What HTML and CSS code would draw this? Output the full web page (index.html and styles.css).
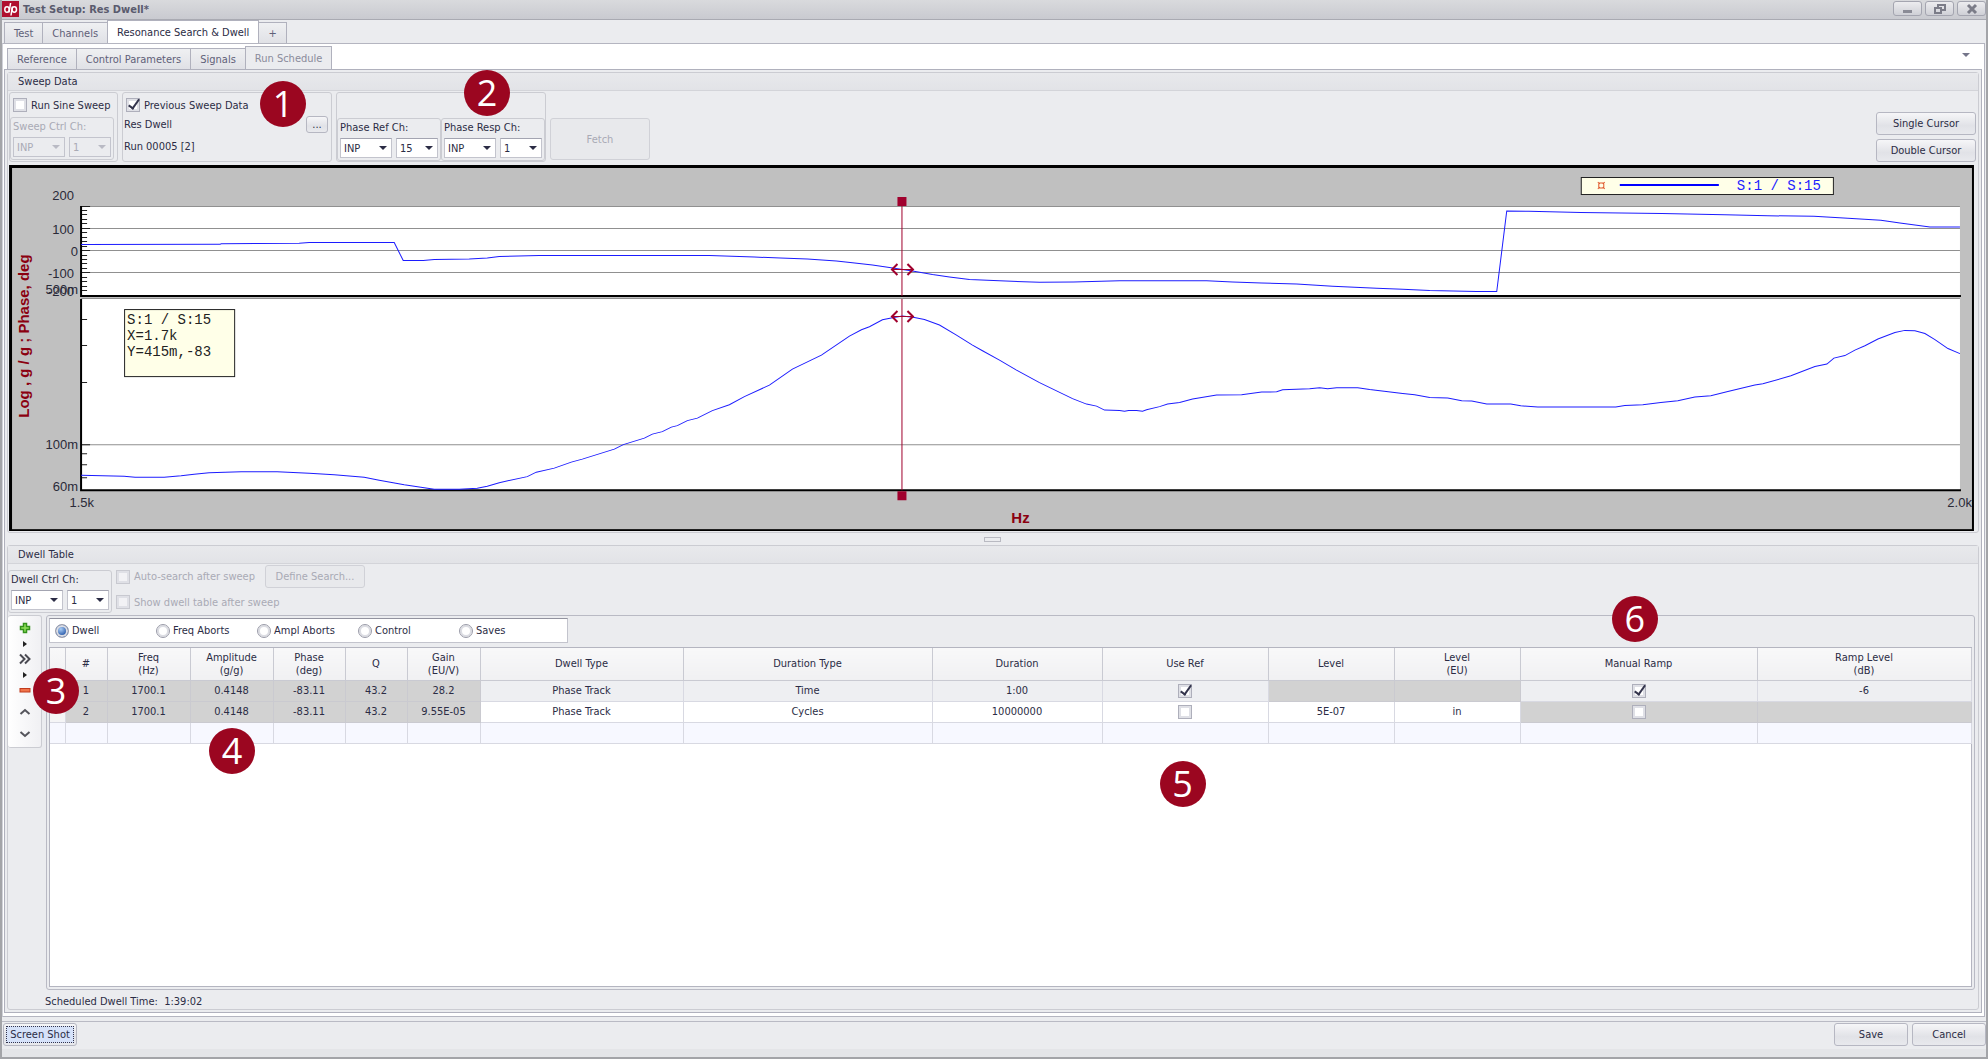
FILE: index.html
```html
<!DOCTYPE html>
<html lang="en">
<head>
    <meta charset="UTF-8">
    <meta name="viewport" content="width=device-width, initial-scale=1.0">
    <title>Test Setup: Res Dwell*</title>
    <link rel="stylesheet" href="styles.css">
</head>
<body>
    <header class="titlebar">
        <svg class="logo" width="18" height="18" viewBox="0 0 18 18">
            <rect width="17" height="16" fill="#b0102e"/>
            <g fill="none" stroke="#fff" stroke-width="1.5">
                <ellipse cx="5" cy="8.5" rx="2.2" ry="2.7"/>
                <path d="M8.6 2L7 11.5"/>
                <ellipse cx="12.3" cy="8.5" rx="2.2" ry="2.7"/>
                <path d="M10.3 5.6L9 14.5"/>
            </g>
        </svg>
        <h1>Test Setup: Res Dwell*</h1>
        <div class="window-buttons">
            <button aria-label="Minimize"><svg width="12" height="12"><path d="M1 8.5H10" stroke="#8a8b96" stroke-width="3"/></svg></button>
            <button aria-label="Restore"><svg width="12" height="12" fill="none" stroke="#7b7c88" stroke-width="2"><path d="M4 4V2H11V7H8"/><path d="M1 5H7V10H1Z"/></svg></button>
            <button aria-label="Close"><svg width="12" height="12"><path d="M2 2L10 10M10 2L2 10" stroke="#7b7c88" stroke-width="3"/></svg></button>
        </div>
    </header>

    <nav class="tabs">
        <button class="tab">Test</button>
        <button class="tab">Channels</button>
        <button class="tab active">Resonance Search &amp; Dwell</button>
        <button class="tab add">+</button>
    </nav>

    <main class="page">
        <nav class="subtabs">
            <button class="tab">Reference</button>
            <button class="tab">Control Parameters</button>
            <button class="tab">Signals</button>
            <button class="tab active">Run Schedule</button>
            <span class="tab-arrow"></span>
        </nav>

        <div class="panel">
            <!-- Sweep data -->
            <section class="group">
                <h2>Sweep Data</h2>
                <div class="sweep-bar">
                    <div class="box">
                        <label class="check"><input type="checkbox"> Run Sine Sweep</label>
                        <div class="channel disabled">
                            <label for="sweepInput">Sweep Ctrl Ch:</label>
                            <div class="combos">
                                <span class="combo"><select id="sweepInput" disabled><option>INP</option></select></span>
                                <span class="combo short"><select aria-label="Sweep channel" disabled><option>1</option></select></span>
                            </div>
                        </div>
                    </div>
                    <div class="box previous">
                        <label class="check"><input type="checkbox" checked> Previous Sweep Data</label>
                        <div class="previous-row"><span>Res Dwell</span><button class="btn browse">...</button></div>
                        <div class="previous-row">Run 00005 [2]</div>
                        <span class="badge badge-1">1</span>
                    </div>
                    <div class="box phase">
                        <div class="channel">
                            <label for="refInput">Phase Ref Ch:</label>
                            <div class="combos">
                                <span class="combo"><select id="refInput"><option>INP</option></select></span>
                                <span class="combo short"><select aria-label="Phase reference channel"><option>15</option></select></span>
                            </div>
                        </div>
                        <div class="channel">
                            <label for="respInput">Phase Resp Ch:</label>
                            <div class="combos">
                                <span class="combo"><select id="respInput"><option>INP</option></select></span>
                                <span class="combo short"><select aria-label="Phase response channel"><option>1</option></select></span>
                            </div>
                        </div>
                        <span class="badge badge-2">2</span>
                    </div>
                    <button class="btn fetch" disabled>Fetch</button>
                    <div class="cursor-buttons">
                        <button class="btn">Single Cursor</button>
                        <button class="btn">Double Cursor</button>
                    </div>
                </div>

                <svg class="chart" viewBox="0 0 1964 366">
                    <rect width="1964" height="366" fill="#000"/>
                    <rect x="3" y="3" width="1959" height="361" fill="#c0c0c0"/>

                    <!-- Plot areas -->
                    <rect x="72" y="41" width="1878" height="90" fill="#fff"/>
                    <rect x="72" y="133" width="1878" height="192" fill="#fff"/>
                    <path class="grid" d="M72 41.5H1950M72 63.5H1950M72 85.5H1950M72 107.5H1950M72 133.5H1950M72 279.5H1950"/>
                    <path class="tick" d="M72 41.5h9M72 45.5h6M72 49.5h6M72 54.5h6M72 58.5h6M72 63.5h9M72 67.5h6M72 72.5h6M72 76.5h6M72 81.5h6M72 85.5h9M72 90.5h6M72 94.5h6M72 98.5h6M72 103.5h6M72 107.5h9M72 112.5h6M72 116.5h6M72 121.5h6M72 125.5h6"/>
                    <path class="tick" d="M72 154.5h6M72 180.5h6M72 217.5h6M72 279.5h9M72 288.5h6M72 299.5h6M72 312.5h6"/>
                    <path class="axis" d="M72 41V131H1951M72 134V325H1951"/>

                    <!-- Phase -->
                    <polyline class="trace" points="72,79.5 211,79.3 212,78.7 290,78.3 300,77.5 385,77.5 394,95.5 414,95.5 425,94.5 460,94 478,93 490,91.5 530,90.5 700,90.5 745,92 771,93 798,94 827,96 843,97.7 863,100 880,102.5 903,106 923,109.5 940,112 960,114.5 990,115.8 1030,117.2 1064,117 1110,115.8 1197,115.8 1223,117 1252,118 1287,119 1323,121.3 1367,123.3 1393,124.3 1420,125.5 1467,126.5 1487,126.5 1497,46 1519,46.3 1571,47.5 1652,48.5 1715,49.7 1758,50.7 1804,51.3 1838,53.3 1871,55.3 1890,58 1920,62 1950,62"/>
                    <!-- Magnitude -->
                    <polyline class="trace" points="72,310 115,311 126,312 155,312 172,310.7 185,309 200,307.7 232,306.7 268,306.7 300,308 325,309.5 355,312 370,315 395,319.5 415,322.5 425,324 450,324 468,323 478,321 490,317.5 518,311.5 527,307 545,303 562,297 573,294 605,284 614,279.5 635,273 643,269 653,266.5 662,262 668,260.5 678,255.5 688,253 703,245.5 720,239.7 735,231.5 760,220 783,204 812,190 840,171 852,164.7 860,161.7 873,154.7 883,152.7 893,151 905,152.5 915,154.5 930,160 947,170 963,180 973,185.7 990,195 1007,205 1030,217.5 1063,233.5 1077,239 1087,241 1095,245 1110,245.3 1115,246.2 1119,245.3 1127,245.3 1133,246.2 1137,244.7 1150,241.5 1158,239 1170,237.3 1183,234 1207,230 1232,229.7 1252,227 1267,226.7 1273,224.7 1300,223.7 1310,222.7 1318,223.7 1327,222.7 1348,222.7 1360,224.5 1393,228.5 1405,229.7 1420,232.5 1438,233 1452,235.7 1462,236 1477,239 1501,239 1511,240.7 1528,242 1606,242 1615,240.5 1633,239.7 1651,237.5 1668,235.7 1685,232 1701,230.7 1718,226.5 1745,220 1753,218.7 1781,210.7 1805,201.5 1817,199 1824,193 1835,190.5 1845,185 1855,180.7 1868,174 1885,167.5 1895,165.3 1905,165.7 1915,168.5 1925,174.5 1938,183.5 1950,188.5"/>

                    <!-- Cursor -->
                    <g fill="none" stroke="#a0002d">
                        <path d="M892.5 41V131M892.5 134V325"/>
                        <path d="M883 104.5H903M883 151.5H903"/>
                        <path d="M888 99L882.5 104.5L888 110M898 99L903.5 104.5L898 110M888 146L882.5 151.5L888 157M898 146L903.5 151.5L898 157" stroke-width="2"/>
                    </g>
                    <path d="M888 32h9v9h-9ZM888 326h9v9h-9Z" fill="#a0002d"/>

                    <g class="scale">
                        <text x="65" y="35">200</text>
                        <text x="65" y="69">100</text>
                        <text x="69" y="91">0</text>
                        <text x="65" y="113">-100</text>
                        <text x="69" y="129">500m</text>
                        <text x="65" y="131">-200</text>
                        <text x="69" y="284">100m</text>
                        <text x="69" y="326">60m</text>
                        <text x="85" y="342">1.5k</text>
                        <text x="1962" y="342">2.0k</text>
                    </g>
                    <text class="axis-title" transform="translate(20 171) rotate(-90)">Log , g / g ; Phase, deg</text>
                    <text class="axis-title" x="1011" y="358">Hz</text>

                    <!-- Legend -->
                    <rect class="note" x="1571.5" y="12.5" width="252" height="17"/>
                    <path d="M1589 18h5v5h-5ZM1588 17l2 2M1595 17l-2 2M1588 24l2-2M1595 24l-2-2" fill="none" stroke="#e0582c"/>
                    <path d="M1610 20H1709" stroke="#00f" stroke-width="2"/>
                    <text class="mono blue" x="1727" y="25">S:1 / S:15</text>

                    <!-- Cursor readout -->
                    <rect class="note" x="115.5" y="144.5" width="110" height="67"/>
                    <text class="mono" x="118" y="159">S:1 / S:15</text>
                    <text class="mono" x="118" y="175">X=1.7k</text>
                    <text class="mono" x="118" y="191">Y=415m,-83</text>
                </svg>
            </section>

            <div class="splitter"></div>

            <!-- Dwell table -->
            <section class="group dwell">
                <h2>Dwell Table</h2>
                <div class="dwell-bar">
                    <div class="channel">
                        <label for="dwellInput">Dwell Ctrl Ch:</label>
                        <div class="combos">
                            <span class="combo"><select id="dwellInput"><option>INP</option></select></span>
                            <span class="combo short"><select aria-label="Dwell channel"><option>1</option></select></span>
                        </div>
                    </div>
                    <div class="dwell-options">
                        <div class="option-row">
                            <label class="check disabled"><input type="checkbox" disabled> Auto-search after sweep</label>
                            <button class="btn define" disabled>Define Search...</button>
                        </div>
                        <label class="check disabled"><input type="checkbox" disabled> Show dwell table after sweep</label>
                    </div>
                </div>

                <div class="dwell-body">
                    <div class="toolbar">
                        <button aria-label="Add"><svg width="12" height="12"><path d="M4.5 1.5h3v3h3v3h-3v3h-3v-3h-3v-3h3Z" fill="#8fe05a" stroke="#35921c" stroke-width="1.5"/></svg></button>
                        <button class="more" aria-label="Add options"><svg width="4" height="6"><path d="M0 0L4 3L0 6Z" fill="#222"/></svg></button>
                        <button aria-label="Insert"><svg width="12" height="12"><path d="M1 1.5L5.5 6L1 10.5M6 1.5L10.5 6L6 10.5" fill="none" stroke="#4a4a52" stroke-width="2"/></svg></button>
                        <button class="more" aria-label="Insert options"><svg width="4" height="6"><path d="M0 0L4 3L0 6Z" fill="#222"/></svg></button>
                        <button aria-label="Remove"><svg width="12" height="12"><rect x="1" y="4.5" width="10" height="3.5" fill="#f0744a" stroke="#c03a1c"/></svg></button>
                        <button aria-label="Move up"><svg width="12" height="12"><path d="M1.5 8L6 4L10.5 8" fill="none" stroke="#55555c" stroke-width="2"/></svg></button>
                        <button aria-label="Move down"><svg width="12" height="12"><path d="M1.5 4L6 8L10.5 4" fill="none" stroke="#55555c" stroke-width="2"/></svg></button>
                        <span class="badge badge-3">3</span>
                    </div>

                    <div class="grid-panel">
                        <div class="views">
                            <label><input type="radio" name="view" checked> Dwell</label>
                            <label><input type="radio" name="view"> Freq Aborts</label>
                            <label><input type="radio" name="view"> Ampl Aborts</label>
                            <label><input type="radio" name="view"> Control</label>
                            <label><input type="radio" name="view"> Saves</label>
                        </div>
                        <div class="grid-area">
                            <table>
                                <colgroup>
                                    <col class="c-mark"><col class="c-num"><col class="c-freq"><col class="c-freq"><col class="c-phase"><col class="c-q"><col class="c-gain">
                                    <col class="c-dwell"><col class="c-durtype"><col class="c-dur"><col class="c-ref"><col class="c-level"><col class="c-level"><col class="c-ramp"><col class="c-ramplevel">
                                </colgroup>
                                <thead>
                                    <tr>
                                        <th></th>
                                        <th>#</th>
                                        <th>Freq<br>(Hz)</th>
                                        <th>Amplitude<br>(g/g)</th>
                                        <th>Phase<br>(deg)</th>
                                        <th>Q</th>
                                        <th>Gain<br>(EU/V)</th>
                                        <th>Dwell Type</th>
                                        <th>Duration Type</th>
                                        <th>Duration</th>
                                        <th>Use Ref</th>
                                        <th>Level</th>
                                        <th>Level<br>(EU)</th>
                                        <th>Manual Ramp</th>
                                        <th>Ramp Level<br>(dB)</th>
                                    </tr>
                                </thead>
                                <tbody>
                                    <tr class="current">
                                        <td class="mark"></td>
                                        <td class="locked">1</td>
                                        <td class="locked">1700.1</td>
                                        <td class="locked">0.4148</td>
                                        <td class="locked">-83.11</td>
                                        <td class="locked">43.2</td>
                                        <td class="locked">28.2</td>
                                        <td>Phase Track</td>
                                        <td>Time</td>
                                        <td>1:00</td>
                                        <td><input type="checkbox" aria-label="Use Ref 1" checked></td>
                                        <td class="locked"></td>
                                        <td class="locked"></td>
                                        <td><input type="checkbox" aria-label="Manual Ramp 1" checked></td>
                                        <td>-6</td>
                                    </tr>
                                    <tr>
                                        <td class="mark"></td>
                                        <td class="locked">2</td>
                                        <td class="locked">1700.1</td>
                                        <td class="locked">0.4148</td>
                                        <td class="locked">-83.11</td>
                                        <td class="locked">43.2</td>
                                        <td class="locked">9.55E-05</td>
                                        <td>Phase Track</td>
                                        <td>Cycles</td>
                                        <td>10000000</td>
                                        <td><input type="checkbox" aria-label="Use Ref 2"></td>
                                        <td>5E-07</td>
                                        <td>in</td>
                                        <td class="locked"><input type="checkbox" aria-label="Manual Ramp 2"></td>
                                        <td class="locked"></td>
                                    </tr>
                                    <tr class="new-row">
                                        <td class="mark"></td><td></td><td></td><td></td><td></td><td></td><td></td><td></td><td></td><td></td><td></td><td></td><td></td><td></td><td></td>
                                    </tr>
                                </tbody>
                            </table>
                        </div>
                        <span class="badge badge-4">4</span>
                        <span class="badge badge-5">5</span>
                        <span class="badge badge-6">6</span>
                    </div>
                </div>
                <p class="total">Scheduled Dwell Time:&nbsp; 1:39:02</p>
            </section>
        </div>
    </main>

    <footer class="footer">
        <button class="btn shot"><span>Screen Shot</span></button>
        <div class="footer-right">
            <button class="btn">Save</button>
            <button class="btn">Cancel</button>
        </div>
    </footer>
</body>
</html>
```
FILE: styles.css
```css
* {
    box-sizing: border-box;
}

body {
    margin: 0;
    height: 100vh;
    display: flex;
    flex-direction: column;
    border: solid #a3a4a8;
    border-width: 0 2px 2px 2px;
    background-color: #ebecef;
    color: #2b2c45;
    font-family: Tahoma, "DejaVu Sans Condensed", "DejaVu Sans", sans-serif;
    font-size: 11px;
    line-height: 13px;
    overflow: hidden;
}

h1, h2, p {
    margin: 0;
}

button, select, input {
    font: inherit;
    color: inherit;
    margin: 0;
}

/* Title bar */
.titlebar {
    display: flex;
    align-items: center;
    height: 20px;
    flex: none;
    gap: 3px;
    border-bottom: 1px solid #a9aab2;
    background: linear-gradient(#d9dadd, #c9cad0);
}

.titlebar h1 {
    flex: 1;
    font-size: 11px;
    color: #5a5b6e;
}

.window-buttons {
    display: flex;
    gap: 3px;
    align-self: flex-start;
    padding-top: 1px;
}

.window-buttons button {
    display: flex;
    align-items: center;
    justify-content: center;
    width: 29px;
    height: 15px;
    padding: 0;
    border: 1px solid #a4a5b0;
    border-radius: 3px;
    background: linear-gradient(#ececef, #cfd0d6);
}

/* Tabs */
.tabs, .subtabs {
    display: flex;
    align-items: flex-end;
    flex: none;
}

.tabs {
    height: 23px;
    padding-left: 2px;
}

.subtabs {
    height: 25px;
    padding: 0 12px 0 3px;
    background-color: #fff;
}

.tab {
    height: 21px;
    padding: 0 9px;
    margin-right: -1px;
    border: 1px solid #b0b1bd;
    border-bottom: none;
    background: linear-gradient(#eff0f2, #e0e1e6);
    color: #5f6078;
    white-space: nowrap;
}

.tabs .active {
    height: 23px;
    background: #fff;
    color: #2b2c45;
}

.subtabs .active {
    height: 23px;
    background: #ebecef;
    color: #8a8b9b;
}

.tab-arrow {
    margin: 0 0 12px auto;
    border: 4px solid transparent;
    border-top-color: #74758a;
    border-bottom: none;
}

.page {
    display: flex;
    flex-direction: column;
    flex: 1;
    min-height: 0;
    margin-right: 1px;
    padding: 0 2px 3px 1px;
    border: 1px solid #b4b5c0;
    border-left-color: #d0d1d8;
    background-color: #fff;
}

.panel {
    display: flex;
    flex-direction: column;
    flex: 1;
    min-height: 0;
    padding: 2px;
    border: 1px solid #b0b1bd;
    background-color: #ebecef;
}

/* Groups */
.group {
    border: 1px solid #cbccd2;
    border-radius: 3px;
}

.group h2 {
    height: 18px;
    padding: 2px 10px;
    border-bottom: 1px solid #d3d4d9;
    background: linear-gradient(#e8e9ec, #e2e3e7);
    font-size: 11px;
    font-weight: normal;
}

.sweep-bar {
    display: flex;
    align-items: flex-end;
    gap: 4px;
    padding: 1px 2px 3px 1px;
}

.box {
    position: relative;
    height: 70px;
    padding: 4px 3px 1px 0;
    border: 1px solid #cbccd2;
    border-radius: 3px;
}

.check {
    display: flex;
    align-items: center;
    gap: 4px;
    height: 16px;
    padding-left: 3px;
    white-space: nowrap;
}

.disabled, .btn:disabled {
    color: #a9aab5;
}

input[type="checkbox"] {
    appearance: none;
    position: relative;
    width: 14px;
    height: 14px;
    flex: none;
    border: 1px solid #aeafbb;
    background-color: #fff;
    box-shadow: inset 0 0 0 2px #dfe0e6;
}

input[type="checkbox"]:checked::after {
    content: "";
    position: absolute;
    left: 4px;
    top: -2px;
    width: 4px;
    height: 10px;
    border: solid #33344c;
    border-width: 0 2px 2px 0;
    transform: rotate(35deg);
}

input[type="checkbox"]:disabled {
    border-color: #c8c9d0;
    background-color: #f2f2f5;
}

.channel {
    width: 104px;
    height: 43px;
    padding: 2px;
    border: 1px solid #cbccd2;
    border-radius: 3px;
}

.box .channel {
    margin-top: 4px;
}

.channel label {
    display: block;
    height: 17px;
}

.combos {
    display: flex;
    gap: 4px;
}

.combo {
    position: relative;
    flex: 52;
}

.combo.short {
    flex: 42;
}

.combo select {
    display: block;
    appearance: none;
    width: 100%;
    height: 20px;
    padding: 0 3px;
    border: 1px solid #c3c4cd;
    border-top-color: #a3a4b1;
    border-radius: 0;
    background-color: #fff;
    opacity: 1;
}

.combo::after {
    content: "";
    position: absolute;
    right: 5px;
    top: 8px;
    border: 4px solid transparent;
    border-top-color: #2b2c45;
    border-bottom: none;
}

.disabled .combo select {
    background-color: #ebecef;
    border-color: #c3c4cd;
}

.disabled .combo::after {
    border-top-color: #b9bac4;
}

.previous {
    width: 210px;
}

.previous-row {
    display: flex;
    align-items: center;
    justify-content: space-between;
    height: 22px;
    padding-left: 1px;
}

.phase {
    display: flex;
    align-items: flex-end;
    width: 210px;
    padding: 0;
}

.btn {
    width: 100px;
    height: 23px;
    padding: 0;
    border: 1px solid #b6b7c2;
    border-radius: 3px;
    background: linear-gradient(#f6f6f8, #e1e2e7 60%, #e8e9ed);
}

.btn:disabled {
    border-color: #d0d1d7;
    background: #e8e9ec;
}

.btn.browse {
    width: 22px;
    height: 17px;
}

.btn.fetch {
    height: 42px;
    margin-bottom: 2px;
}

.cursor-buttons {
    display: flex;
    flex-direction: column;
    gap: 4px;
    margin-left: auto;
}

/* Chart */
.chart {
    display: block;
    width: calc(100% - 5px);
    margin: 0 4px 1px 1px;
}

.grid, .tick, .axis, .trace {
    fill: none;
}

.grid {
    stroke: #909090;
}

.tick {
    stroke: #222;
}

.axis {
    stroke: #000;
    stroke-width: 2;
}

.trace {
    stroke: #1c1cff;
}

.scale {
    fill: #2a2a38;
    font: 13px "Liberation Sans", Arial, sans-serif;
    text-anchor: end;
}

.axis-title {
    fill: #8b0010;
    font: bold 15px "Liberation Sans", Arial, sans-serif;
    text-anchor: middle;
}

.note {
    fill: #ffffe8;
    stroke: #222;
}

.mono {
    fill: #222;
    font: 14px "Liberation Mono", "Courier New", monospace;
}

.mono.blue {
    fill: #22f;
}

.splitter {
    position: relative;
    flex: none;
    height: 12px;
}

.splitter::after {
    content: "";
    position: absolute;
    left: calc(50% - 9px);
    top: 4px;
    width: 15px;
    height: 3px;
    border: 1px solid #b9bac2;
}

/* Dwell table */
.dwell {
    display: flex;
    flex-direction: column;
    flex: 1;
    min-height: 0;
}

.dwell-bar {
    display: flex;
    gap: 4px;
    height: 50px;
    padding-top: 1px;
}

.dwell-bar .channel {
    margin-top: 5px;
}

.dwell-options .check {
    padding: 0;
}

.option-row {
    display: flex;
    align-items: center;
    gap: 10px;
    height: 23px;
    margin-bottom: 6px;
}

.dwell-body {
    display: flex;
    flex: 1;
    min-height: 0;
    gap: 4px;
    margin-top: 1px;
    padding-right: 3px;
}

.toolbar {
    position: relative;
    display: flex;
    flex-direction: column;
    align-items: center;
    width: 34px;
    height: 133px;
    padding: 1px 0;
    border: 1px solid #cbccd2;
    border-left: none;
    border-radius: 3px;
    background: linear-gradient(to right, #fff, #f0f0f3);
}

.toolbar button {
    display: flex;
    align-items: center;
    justify-content: center;
    width: 22px;
    height: 22px;
    padding: 0;
    border: none;
    background: none;
}

.toolbar .more {
    height: 9px;
}

.grid-panel {
    position: relative;
    display: flex;
    flex-direction: column;
    flex: 1;
    min-width: 0;
    padding: 2px;
    border: 1px solid #b9bac4;
    border-radius: 3px;
}

.views {
    display: flex;
    align-items: center;
    width: 519px;
    height: 25px;
    padding-left: 5px;
    border: 1px solid #c3c4cd;
    border-top-color: #92939f;
    background-color: #fff;
}

.views label {
    display: flex;
    align-items: center;
    gap: 3px;
    width: 101px;
    white-space: nowrap;
}

input[type="radio"] {
    appearance: none;
    width: 14px;
    height: 14px;
    border: 1px solid #9a9ba8;
    border-radius: 50%;
    background-color: #fff;
    box-shadow: inset 0 0 0 2px #dcdde3;
}

input[type="radio"]:checked {
    background: radial-gradient(circle at 40% 35%, #a9cdf5, #2c5cab 60%);
}

.grid-area {
    flex: 1;
    margin-top: 4px;
    border: 1px solid #b4b5c0;
    background-color: #fff;
}

table {
    width: 100%;
    table-layout: fixed;
    border-collapse: collapse;
    text-align: center;
}

th, td {
    padding: 0;
    border-right: 1px solid #d8d9e2;
    border-bottom: 1px solid #d8d9e2;
}

th {
    height: 32px;
    border-color: #c9cad2;
    background: linear-gradient(#f8f8f9, #f0f0f2);
    font-weight: normal;
}

td {
    height: 21px;
}

td input[type="checkbox"] {
    display: block;
    margin: 0 auto;
}

.current td {
    background-color: #eeeff2;
}

td.locked, .current td.locked {
    border-color: #cacad0;
    background-color: #d2d2d2;
}

td.mark {
    background-color: #f5f5f6;
}

.new-row td {
    background-color: #f7f8ff;
}

.c-mark { width: 15px; }
.c-num { width: 42px; }
.c-freq { width: 83px; }
.c-phase { width: 72px; }
.c-q { width: 62px; }
.c-gain { width: 73px; }
.c-dwell { width: 203px; }
.c-durtype { width: 249px; }
.c-dur { width: 170px; }
.c-ref { width: 166px; }
.c-level { width: 126px; }
.c-ramp { width: 237px; }
.c-ramplevel { width: 214px; }

.total {
    padding: 5px 0 1px 37px;
}

/* Numbered callouts */
.badge {
    position: absolute;
    z-index: 1;
    width: 46px;
    height: 46px;
    border-radius: 50%;
    background-color: #9b0620;
    color: #fff;
    font: 36px/46px "Open Sans", sans-serif;
    text-align: center;
}

.badge-1 { right: 25px; top: -12px; }
.badge-2 { right: 35px; top: -23px; }
.badge-3 { left: 25px; top: 52px; }
.badge-4 { left: 162px; top: 112px; }
.badge-5 { left: calc(58% - 5px); top: 145px; }
.badge-6 { left: calc(81% + 4px); top: -20px; }

/* Footer */
.footer {
    display: flex;
    align-items: center;
    justify-content: space-between;
    flex: none;
    height: 36px;
    margin-top: 4px;
    padding: 0 0 10px 1px;
    border-top: 1px solid #b9bac4;
    background: linear-gradient(#ebecef 27px, #e4e5e8 27px);
}

.footer-right {
    display: flex;
    gap: 4px;
}

.footer .btn {
    width: 74px;
}

.footer .shot {
    padding: 2px;
}

.shot span {
    display: block;
    border: 1px dotted #33344c;
    background-color: #d6e2fa;
    line-height: 15px;
}
```
